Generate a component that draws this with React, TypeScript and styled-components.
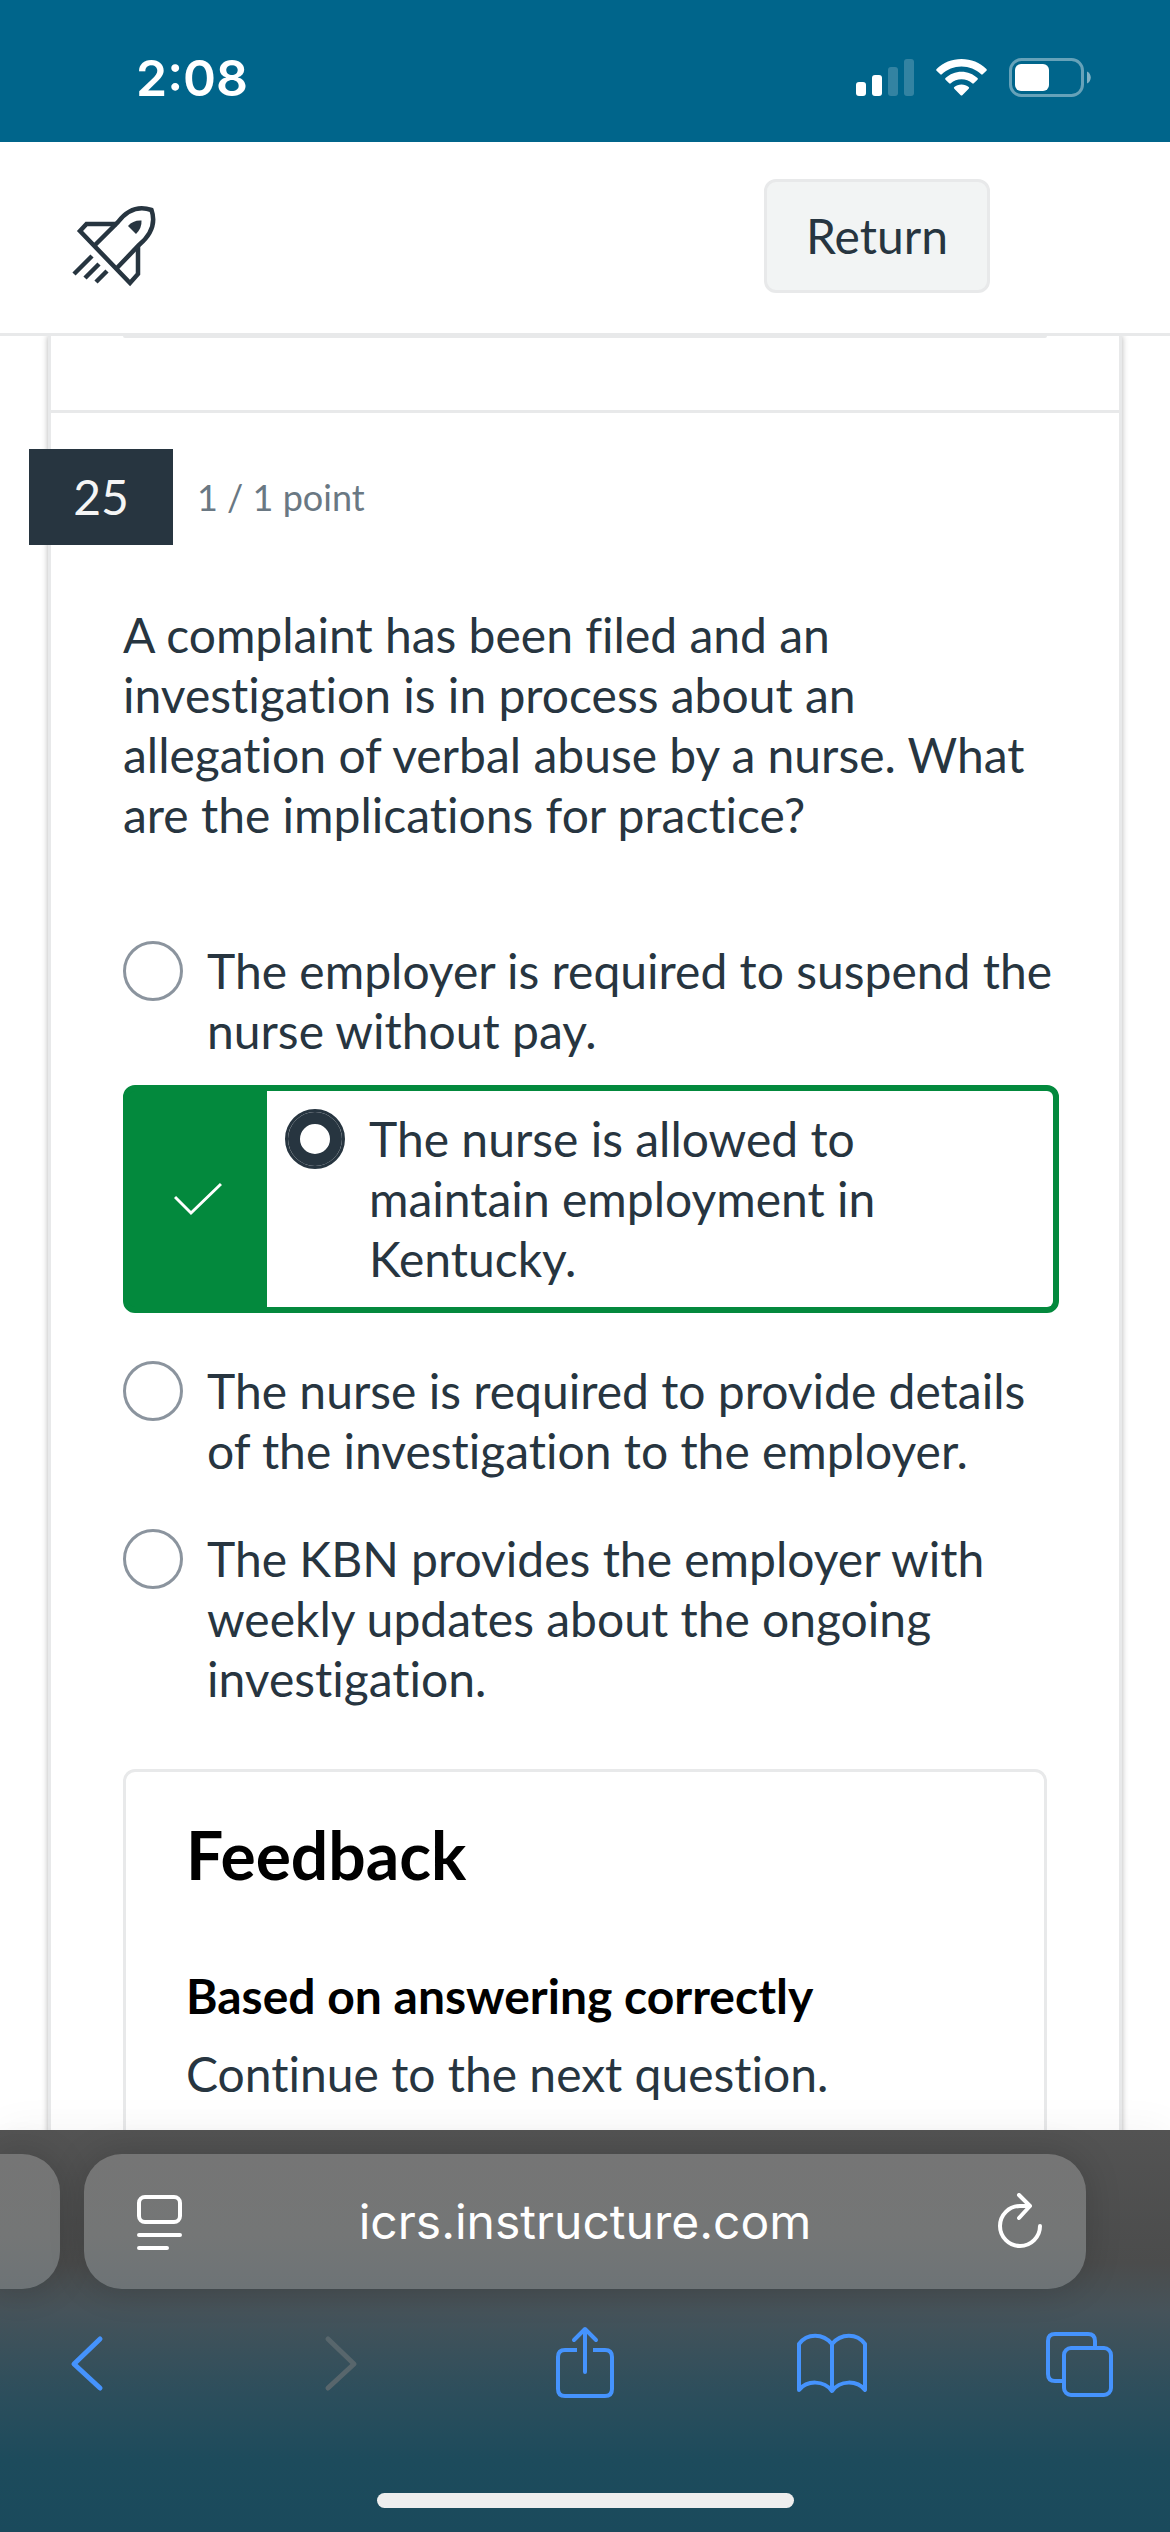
import React from "react";
import styled, { createGlobalStyle } from "styled-components";

const ink = "#273540";
const line = "#e8e9ea";
const green = "#03893d";
const blue = "#4593fd";

const GlobalStyle = createGlobalStyle`
  * { box-sizing: border-box; }
  body { margin: 0; background: #fff; }
  h2, h3, p { margin: 0; }
  button { font: inherit; color: inherit; border: 0; padding: 0; background: none; }
`;

const Screen = styled.div`
  display: flex;
  flex-direction: column;
  height: 100vh;
  overflow: hidden;
  color: ${ink};
  font: 400 48px/60px Lato, "Liberation Sans", sans-serif;
  font-variant-ligatures: none;
`;

const StatusBar = styled.div`
  flex: none;
  display: flex;
  align-items: center;
  justify-content: space-between;
  height: 142px;
  padding: 13px 79px 0 136px;
  background: #00658b;
  color: #fff;
`;

const Clock = styled.time`
  font: 600 50px/60px Inter, sans-serif;
`;

const StatusIcons = styled.div`
  display: flex;
  align-items: center;
  gap: 22px;
  svg { display: block; }
`;

const Header = styled.header`
  flex: none;
  display: flex;
  align-items: center;
  justify-content: space-between;
  height: 194px;
  padding: 0 180px 3px 72px;
  border-bottom: 3px solid ${line};
  background: #fff;
`;

const ReturnButton = styled.button`
  padding: 24px 39px;
  border: 3px solid ${line};
  border-radius: 12px;
  background: #f2f4f4;
`;

const Page = styled.main`
  flex: 1;
  min-height: 0;
  overflow: hidden;
  padding: 0 48px;
`;

const Sheet = styled.div`
  min-height: 100%;
  border: solid ${line};
  border-width: 0 3px;
  box-shadow: 0 0 6px rgba(0, 0, 0, 0.3);
`;

const PreviousQuestion = styled.div`
  height: 77px;
  padding: 0 72px;
  border-bottom: 3px solid ${line};
`;

const PreviousFeedback = styled.div`
  height: 2px;
  border-bottom: 2px solid ${line};
  border-radius: 0 0 12px 12px;
`;

const QuestionHeader = styled.div`
  display: flex;
  align-items: center;
  gap: 24px;
  margin: 36px 0 0 -22px;
`;

const QuestionNumber = styled.div`
  width: 144px;
  padding: 18px 0;
  background: ${ink};
  color: #f5f5f5;
  text-align: center;
`;

const Points = styled.div`
  color: #6a7883;
  font-size: 36px;
`;

const QuestionBody = styled.section`
  padding: 60px 72px 0;
`;

const Options = styled.div`
  display: flex;
  flex-direction: column;
  margin: 72px -12px 36px 0;
`;

const OptionRow = styled.label`
  display: flex;
  align-items: flex-start;
  gap: 24px;
  padding: 24px 0;
`;

const Radio = styled.input`
  appearance: none;
  flex: none;
  width: 60px;
  height: 60px;
  margin: 0;
  border: 3px solid #8b949e;
  border-radius: 50%;
  background: #fff;
  &:checked {
    border-color: ${ink};
    box-shadow: inset 0 0 0 12px ${ink};
  }
`;

const CorrectFrame = styled.div`
  display: flex;
  margin: 0 0 24px;
  border: 6px solid ${green};
  border-radius: 12px;
  background: ${green};
  ${OptionRow} {
    flex: 1;
    padding: 18px;
    border-radius: 0 6px 6px 0;
    background: #fff;
  }
`;

const CorrectMark = styled.div`
  display: flex;
  align-items: center;
  justify-content: center;
  width: 138px;
`;

const Feedback = styled.section`
  padding: 42px 60px;
  border: 3px solid ${line};
  border-radius: 12px;
`;

const FeedbackTitle = styled.h2`
  color: #000;
  font-size: 66px;
  line-height: 82px;
`;

const FeedbackReason = styled.h3`
  margin: 70px 0 18px;
  color: #000;
  font-size: 48px;
`;

const BrowserBar = styled.footer`
  flex: none;
  padding: 24px 0;
  background: linear-gradient(#535353 0%, #4b4c4c 33%, #46535a 45%, #2c4e5c 66%, #1d4b5c 82%, #1a4a5c 100%);
  box-shadow: 0 0 40px rgba(0, 0, 0, 0.05);
`;

const TabStrip = styled.div`
  display: flex;
  gap: 24px;
  padding-right: 84px;
`;

const Pill = styled.div`
  height: 135px;
  background: linear-gradient(#757575, #747676 60%, #6d7376);
  box-shadow: 0 0 36px rgba(0, 0, 0, 0.16);
`;

const NeighbourTab = styled(Pill)`
  width: 60px;
  border-radius: 0 38px 38px 0;
`;

const AddressBar = styled(Pill)`
  flex: 1;
  display: flex;
  align-items: center;
  justify-content: space-between;
  padding: 0 42px;
  border-radius: 38px;
  color: #fff;
`;

const Address = styled.button`
  font: 400 48px/60px Inter, sans-serif;
`;

const IconButton = styled.button`
  display: flex;
  align-items: center;
  justify-content: center;
  color: ${blue};
  &:disabled { color: #58666c; }
`;

const PlainIconButton = styled(IconButton)`
  color: #fff;
`;

const Toolbar = styled.nav`
  display: flex;
  justify-content: space-between;
  padding: 36px 54px 94px 52px;
`;

const HomeIndicator = styled.div`
  width: 417px;
  height: 15px;
  margin: 0 auto;
  border-radius: 8px;
  background: #eee;
`;

const strokeProps = {
  fill: "none",
  stroke: "currentColor",
  strokeWidth: 5,
  strokeLinecap: "round" as const,
  strokeLinejoin: "round" as const,
};

const SignalIcon = () => (
  <svg width="58" height="38" viewBox="0 0 58 38" fill="#fff">
    <rect x="0" y="23" width="10" height="14" rx="3" />
    <rect x="16" y="16" width="10" height="21" rx="3" />
    <rect x="32" y="8" width="10" height="29" rx="3" opacity=".2" />
    <rect x="48" y="0" width="10" height="37" rx="3" opacity=".2" />
  </svg>
);

const WifiIcon = () => (
  <svg width="51" height="38" viewBox="0 0 51 38" fill="#fff">
    <path d="M25.500 0C35 0 44 3.600 50.400 10Q51.200 10.900 50.400 11.700L46.700 15.300Q46 16 45.200 15.300C40 10.300 33 7.400 25.500 7.400S11 10.300 5.800 15.300Q5 16 4.300 15.300L.6 11.700Q-.2 10.900.6 10C7 3.600 16 0 25.500 0Z" />
    <path d="M25.500 12.700C31.600 12.700 37.200 15 41.500 19Q42.300 19.800 41.500 20.700L37.800 24.300Q37 25 36.200 24.300C33.300 21.700 29.600 20.200 25.500 20.200S17.700 21.700 14.800 24.300Q14 25 13.200 24.300L9.500 20.700Q8.700 19.800 9.500 19C13.800 15 19.400 12.700 25.500 12.700Z" />
    <path d="M25.500 25.500C28.300 25.500 30.800 26.400 32.700 28Q33.600 28.800 32.700 29.700L26.300 36.200Q25.500 37 24.700 36.200L18.300 29.700Q17.400 28.800 18.300 28C20.200 26.400 22.700 25.500 25.500 25.500Z" />
  </svg>
);

const BatteryIcon = () => (
  <svg width="82" height="39" viewBox="0 0 82 39" fill="#fff">
    <rect x="1.500" y="1.500" width="72" height="36" rx="11" fill="none" stroke="#fff" strokeWidth="3" opacity=".4" />
    <rect x="6" y="6" width="34" height="27" rx="6" />
    <path d="M78 13.500C83 15.500 83 23.500 78 25.500Z" opacity=".5" />
  </svg>
);

const RocketIcon = () => (
  <svg width="86" height="102" viewBox="0 -20 86 102" fill="none" stroke={ink} strokeWidth="4.5">
    <path d="M22 41L46 17C56 4 68 1 79.500 5C84 18 80 29 67 40L44 64" />
    <path d="M45 19H14.500L8 26L58 78L66 69V41" />
    <path d="M2 69L20 51M13 73L27 59M24 77L35 66" />
    <path d="M56 21Q61 15 69.500 15.500Q70 23 64 29Z" fill={ink} stroke="none" />
  </svg>
);

const CheckIcon = () => (
  <svg width="48" height="34" viewBox="0 0 48 34" fill="none" stroke="#fff" strokeWidth="3">
    <path d="M1 15L17 31L47 2" />
  </svg>
);

const PageMenuIcon = () => (
  <svg width="56" height="56" viewBox="0 0 56 56" {...strokeProps} strokeWidth="4">
    <rect x="13" y="3" width="41" height="25" rx="6" />
    <path d="M13 41H54M13 54H41" />
  </svg>
);

const ReloadIcon = () => (
  <svg width="56" height="58" viewBox="0 0 56 58" {...strokeProps} strokeWidth="4">
    <path d="M52 33A20 20 0 1 1 32 13H42M31 2L42 13L31 25" />
  </svg>
);

const BackIcon = () => (
  <svg width="72" height="74" viewBox="0 0 72 74" {...strokeProps}>
    <path d="M48 14L22 39L48 63" />
  </svg>
);

const ForwardIcon = () => (
  <svg width="72" height="74" viewBox="0 0 72 74" {...strokeProps}>
    <path d="M28 14L54 39L28 63" />
  </svg>
);

const ShareIcon = () => (
  <svg width="72" height="74" viewBox="0 0 72 74" {...strokeProps} strokeWidth="4">
    <path strokeLinecap="butt" d="M29 25H17Q10 25 10 32V64Q10 71 17 71H57Q64 71 64 64V32Q64 25 57 25H45" />
    <path d="M37 47V5M26 15L37 4L48 15" />
  </svg>
);

const BookIcon = () => (
  <svg width="72" height="74" viewBox="0 0 72 74" {...strokeProps} strokeWidth="4">
    <path d="M36 19C27 8 11 8 3 19V65C11 55 28 55 36 66C44 55 61 55 69 65V19C61 8 45 8 36 19ZM36 19V66" />
  </svg>
);

const TabsIcon = () => (
  <svg width="72" height="74" viewBox="0 0 72 74" {...strokeProps} strokeWidth="4">
    <rect x="20" y="23" width="47" height="47" rx="7" />
    <path strokeLinecap="butt" d="M51 21V16Q51 9 44 9H11Q4 9 4 16V49Q4 56 11 56H18" />
  </svg>
);

const answers = [
  { id: "suspend", text: "The employer is required to suspend the nurse without pay." },
  { id: "allowed", text: "The nurse is allowed to maintain employment in Kentucky.", correct: true },
  { id: "details", text: "The nurse is required to provide details of the investigation to the employer." },
  { id: "updates", text: "The KBN provides the employer with weekly updates about the ongoing investigation." },
];

function Answer({ id, text, correct }: { id: string; text: string; correct?: boolean }) {
  const row = (
    <OptionRow htmlFor={id}>
      <Radio type="radio" id={id} name="question-25" defaultChecked={correct} />
      <span>{text}</span>
    </OptionRow>
  );
  if (!correct) return row;
  return (
    <CorrectFrame>
      <CorrectMark><CheckIcon /></CorrectMark>
      {row}
    </CorrectFrame>
  );
}

export default function App() {
  return (
    <Screen>
      <GlobalStyle />
      <StatusBar>
        <Clock>2:08</Clock>
        <StatusIcons><SignalIcon /><WifiIcon /><BatteryIcon /></StatusIcons>
      </StatusBar>
      <Header>
        <RocketIcon />
        <ReturnButton type="button">Return</ReturnButton>
      </Header>
      <Page>
        <Sheet>
          <PreviousQuestion><PreviousFeedback /></PreviousQuestion>
          <QuestionHeader>
            <QuestionNumber>25</QuestionNumber>
            <Points>1 / 1 point</Points>
          </QuestionHeader>
          <QuestionBody>
            <p>
              A complaint has been filed and an investigation is in process about an
              allegation of verbal abuse by a nurse. What are the implications for practice?
            </p>
            <Options role="radiogroup">
              {answers.map((answer) => <Answer key={answer.id} {...answer} />)}
            </Options>
            <Feedback>
              <FeedbackTitle>Feedback</FeedbackTitle>
              <FeedbackReason>Based on answering correctly</FeedbackReason>
              <p>Continue to the next question.</p>
            </Feedback>
          </QuestionBody>
        </Sheet>
      </Page>
      <BrowserBar>
        <TabStrip>
          <NeighbourTab />
          <AddressBar>
            <PlainIconButton type="button" aria-label="Page menu"><PageMenuIcon /></PlainIconButton>
            <Address type="button">icrs.instructure.com</Address>
            <PlainIconButton type="button" aria-label="Reload"><ReloadIcon /></PlainIconButton>
          </AddressBar>
        </TabStrip>
        <Toolbar>
          <IconButton type="button" aria-label="Back"><BackIcon /></IconButton>
          <IconButton type="button" aria-label="Forward" disabled><ForwardIcon /></IconButton>
          <IconButton type="button" aria-label="Share"><ShareIcon /></IconButton>
          <IconButton type="button" aria-label="Bookmarks"><BookIcon /></IconButton>
          <IconButton type="button" aria-label="Tabs"><TabsIcon /></IconButton>
        </Toolbar>
        <HomeIndicator />
      </BrowserBar>
    </Screen>
  );
}
